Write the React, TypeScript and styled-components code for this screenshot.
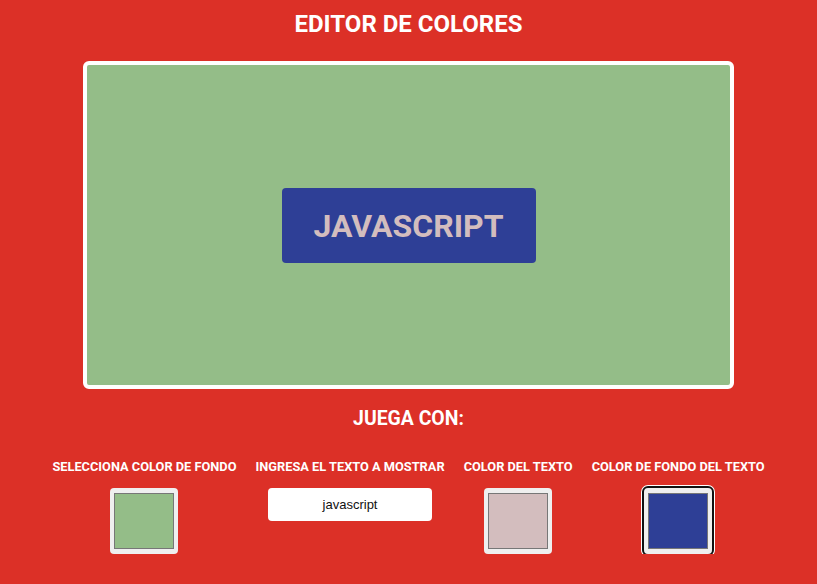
import React, { useState } from "react";
import styled, { createGlobalStyle } from "styled-components";

const Global = createGlobalStyle`
  html, body { margin: 0; padding: 0; }
  body {
    background: #dc3027;
    font-family: Roboto, "Liberation Sans", sans-serif;
    color: #ffffff;
  }
`;

const Page = styled.main`
  display: flex;
  flex-direction: column;
  align-items: center;
  padding-top: 10px;
`;

const Title = styled.h1`
  margin: 0;
  font-size: 24px;
  line-height: 28px;
  font-weight: 700;
`;

const Preview = styled.section<{ $bg: string }>`
  margin-top: 23px;
  width: 651px;
  height: 328px;
  box-sizing: border-box;
  border: 4px solid #ffffff;
  border-radius: 6px;
  background: ${(p) => p.$bg};
  display: flex;
  align-items: center;
  justify-content: center;
`;

const Word = styled.div<{ $bg: string; $fg: string }>`
  width: 254px;
  height: 75px;
  margin-top: 1px;
  border-radius: 4px;
  background: ${(p) => p.$bg};
  color: ${(p) => p.$fg};
  font-size: 32px;
  font-weight: 700;
  display: flex;
  align-items: center;
  justify-content: center;
`;

const Subtitle = styled.h2`
  margin: 18px 0 0;
  font-size: 19.4px;
  line-height: 24px;
  font-weight: 700;
`;

const Controls = styled.div`
  margin-top: 28px;
  display: flex;
  justify-content: center;
  gap: 19px;
`;

const Control = styled.label`
  display: flex;
  flex-direction: column;
  align-items: center;
  gap: 13px;
`;

const Label = styled.span`
  font-size: 12.8px;
  line-height: 16px;
  font-weight: 700;
  white-space: nowrap;
`;

const ColorInput = styled.input<{ $focused?: boolean }>`
  -webkit-appearance: none;
  appearance: none;
  width: 68px;
  height: 66px;
  margin: 0;
  padding: 0;
  border: none;
  border-radius: 4px;
  background: #efefef;
  cursor: pointer;
  outline: ${(p) => (p.$focused ? "2px solid #111111" : "none")};
  outline-offset: 0;
  box-shadow: ${(p) => (p.$focused ? "0 0 0 3px #ffffff" : "none")};
  &::-webkit-color-swatch-wrapper {
    padding: 5px 4px;
  }
  &::-webkit-color-swatch {
    border: 1px solid #777777;
    border-radius: 0;
  }
`;

const TextInput = styled.input`
  width: 164px;
  height: 33px;
  box-sizing: border-box;
  margin: 0;
  border: none;
  border-radius: 4px;
  background: #ffffff;
  text-align: center;
  font-family: "Liberation Sans", Arial, sans-serif;
  font-size: 13px;
  color: #111111;
  outline: none;
`;

export default function App() {
  const [bg, setBg] = useState("#94bd88");
  const [text, setText] = useState("javascript");
  const [fg, setFg] = useState("#d3bdbe");
  const [textBg, setTextBg] = useState("#2e3f96");

  return (
    <>
      <Global />
      <Page>
        <Title>EDITOR DE COLORES</Title>
        <Preview $bg={bg}>
          <Word $bg={textBg} $fg={fg}>
            {text.toUpperCase()}
          </Word>
        </Preview>
        <Subtitle>JUEGA CON:</Subtitle>
        <Controls>
          <Control>
            <Label>SELECCIONA COLOR DE FONDO</Label>
            <ColorInput type="color" value={bg} onChange={(e) => setBg(e.target.value)} />
          </Control>
          <Control>
            <Label>INGRESA EL TEXTO A MOSTRAR</Label>
            <TextInput type="text" value={text} onChange={(e) => setText(e.target.value)} />
          </Control>
          <Control>
            <Label>COLOR DEL TEXTO</Label>
            <ColorInput type="color" value={fg} onChange={(e) => setFg(e.target.value)} />
          </Control>
          <Control>
            <Label>COLOR DE FONDO DEL TEXTO</Label>
            <ColorInput
              type="color"
              $focused
              value={textBg}
              onChange={(e) => setTextBg(e.target.value)}
            />
          </Control>
        </Controls>
      </Page>
    </>
  );
}
